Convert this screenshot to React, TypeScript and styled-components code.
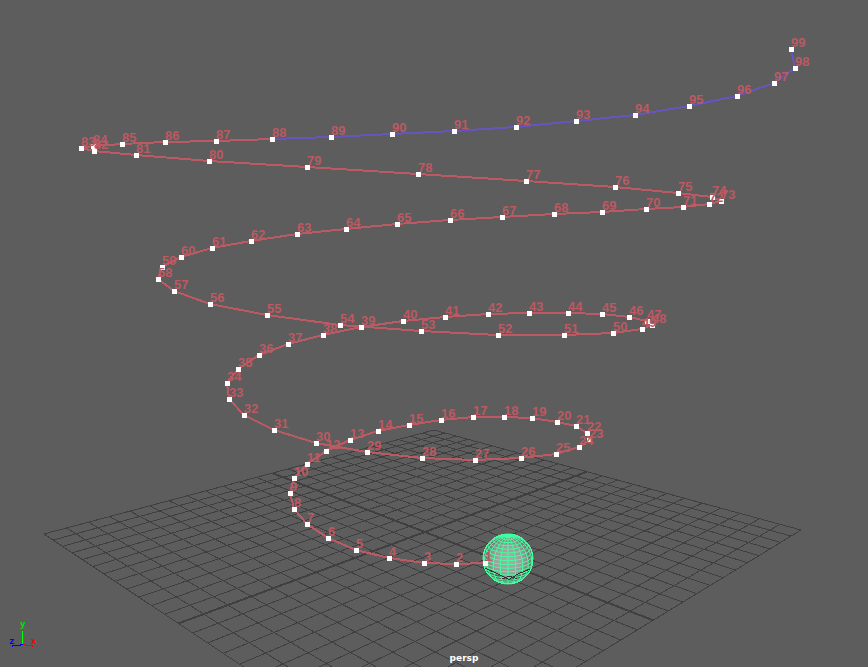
import React from "react";
import styled, { createGlobalStyle } from "styled-components";

type Point = [number, number];

const GlobalStyle = createGlobalStyle`
  html, body { margin: 0; background: #5d5d5d; }
`;

const Viewport = styled.main`
  display: grid;
  min-height: 100vh;
  background: #5d5d5d;
`;

const Scene = styled.svg`
  display: block;
  width: 100%;
  height: 100vh;
`;

const GridLine = styled.line<{ $major?: boolean }>`
  stroke: #404040;
  stroke-width: ${(p) => (p.$major ? 2 : 1)};
  shape-rendering: crispEdges;
`;

const Trail = styled.polyline<{ $tone: string }>`
  fill: none;
  stroke: ${(p) => p.$tone};
  stroke-width: 2;
  shape-rendering: crispEdges;
`;

const Marker = styled.rect`
  fill: #ffffff;
  shape-rendering: crispEdges;
`;

const FrameLabel = styled.text`
  fill: #bc5962;
  font: bold 13px "Liberation Sans", Arial, sans-serif;
`;

const Wire = styled.path`
  fill: none;
  stroke: #43ff9f;
  stroke-width: 1;
`;

const Outline = styled.circle`
  fill: none;
  stroke: #43ff9f;
  stroke-width: 1;
  shape-rendering: crispEdges;
`;

const GroundEdge = styled.polyline`
  fill: none;
  stroke: #2c3a34;
  stroke-width: 1;
  shape-rendering: crispEdges;
`;

const Axis = styled.path<{ $tone: string }>`
  fill: none;
  stroke: ${(p) => p.$tone};
  stroke-width: 1;
  shape-rendering: crispEdges;
`;

const AxisLabel = styled.text<{ $tone: string }>`
  fill: ${(p) => p.$tone};
  font: bold 9px "DejaVu Sans Mono", monospace;
`;

const CameraName = styled.text`
  fill: #ffffff;
  font: bold 9px "DejaVu Sans", sans-serif;
  text-anchor: middle;
`;

const frames: Point[] = [
  [485, 563], [456, 564], [424, 563], [389, 558], [356, 550], [328, 538],
  [307, 524], [294, 509], [290, 493], [294, 478], [307, 464], [326, 451],
  [350, 440], [378, 431], [409, 425], [441, 420], [473, 417], [504, 417],
  [532, 418], [557, 422], [576, 426], [587, 433], [589, 440], [579, 447],
  [556, 454], [521, 458], [475, 460], [422, 458], [367, 452], [316, 443],
  [274, 430], [244, 415], [229, 399], [227, 383], [238, 369], [259, 355],
  [288, 344], [323, 335], [361, 327], [403, 321], [445, 317], [488, 314],
  [529, 313], [568, 313], [602, 314], [629, 317], [647, 321], [652, 325],
  [642, 329], [613, 333], [564, 335], [498, 335], [421, 331], [340, 325],
  [267, 315], [210, 304], [174, 291], [158, 279], [162, 267], [181, 257],
  [212, 248], [251, 241], [297, 234], [346, 229], [397, 224], [450, 220],
  [502, 217], [554, 214], [602, 212], [646, 209], [683, 207], [709, 204],
  [721, 201], [712, 197], [678, 193], [615, 187], [526, 181], [418, 174],
  [307, 167], [209, 161], [136, 155], [94, 151], [81, 148], [93, 146],
  [122, 144], [165, 142], [216, 141], [272, 139], [331, 137], [392, 134],
  [454, 131], [516, 127], [576, 121], [635, 115], [689, 106], [737, 96],
  [774, 83], [795, 68], [791, 49],
];

const toPoints = (list: Point[]) => list.map((p) => p.join(",")).join(" ");

// Perspective mapping of the unit square onto the ground plane quad.
const makeProjection = (a: Point, b: Point, c: Point, d: Point) => {
  const dx1 = b[0] - c[0];
  const dy1 = b[1] - c[1];
  const dx2 = d[0] - c[0];
  const dy2 = d[1] - c[1];
  const sx = a[0] - b[0] + c[0] - d[0];
  const sy = a[1] - b[1] + c[1] - d[1];
  const det = dx1 * dy2 - dx2 * dy1;
  const g = (sx * dy2 - dx2 * sy) / det;
  const h = (dx1 * sy - sx * dy1) / det;
  return (u: number, v: number): Point => {
    const w = g * u + h * v + 1;
    return [
      ((b[0] - a[0] + g * b[0]) * u + (d[0] - a[0] + h * d[0]) * v + a[0]) / w,
      ((b[1] - a[1] + g * b[1]) * u + (d[1] - a[1] + h * d[1]) * v + a[1]) / w,
    ];
  };
};

const ground = makeProjection([44, 534], [403, 773], [801, 530], [434, 430]);
const CELLS = 24;

const Ground = () => (
  <g>
    {Array.from({ length: CELLS + 1 }, (_, i) => {
      const t = i / CELLS;
      const major = i === CELLS / 2;
      const [a, b, c, d] = [ground(t, 0), ground(t, 1), ground(0, t), ground(1, t)];
      return (
        <React.Fragment key={i}>
          <GridLine $major={major} x1={a[0]} y1={a[1]} x2={b[0]} y2={b[1]} />
          <GridLine $major={major} x1={c[0]} y1={c[1]} x2={d[0]} y2={d[1]} />
        </React.Fragment>
      );
    })}
  </g>
);

const CENTER: Point = [508, 559];
const RADIUS = 25;
const TILT = (22 * Math.PI) / 180;

const spherePath = () => {
  const project = (lat: number, lon: number) => {
    const x = Math.cos(lat) * Math.sin(lon);
    const y = Math.sin(lat);
    const z = Math.cos(lat) * Math.cos(lon);
    return {
      x: CENTER[0] + RADIUS * x,
      y: CENTER[1] - RADIUS * (y * Math.cos(TILT) - z * Math.sin(TILT)),
      front: y * Math.sin(TILT) + z * Math.cos(TILT) > -0.02,
    };
  };
  const step = Math.PI / 10;
  let d = "";
  const segment = (a: ReturnType<typeof project>, b: ReturnType<typeof project>) => {
    if (a.front && b.front) {
      d += `M${a.x.toFixed(1)} ${a.y.toFixed(1)}L${b.x.toFixed(1)} ${b.y.toFixed(1)}`;
    }
  };
  for (let i = 0; i < 20; i++) {
    for (let j = -10; j < 10; j++) {
      const lat = (j * step) / 2;
      segment(project(lat, i * step), project(lat + step / 2, i * step));
      segment(project(lat, i * step), project(lat, (i + 1) * step));
    }
  }
  return d;
};

const Sphere = () => (
  <g>
    <defs>
      <radialGradient id="shade" cx="0.5" cy="0.52" r="0.52">
        <stop offset="0" stopColor="#b0adad" />
        <stop offset="0.6" stopColor="#9c9999" />
        <stop offset="1" stopColor="#666666" />
      </radialGradient>
      <clipPath id="above">
        <path d="M480 530H536V568L510 579L480 566Z" />
      </clipPath>
    </defs>
    <circle cx={CENTER[0]} cy={CENTER[1]} r={RADIUS} fill="url(#shade)" clipPath="url(#above)" />
    <Wire d={spherePath()} />
    <Outline cx={CENTER[0]} cy={CENTER[1]} r={RADIUS} />
    <GroundEdge points="485,568 498,574 510,580" />
    <GroundEdge points="530,569 518,574 508,580" />
    <GroundEdge points="502,579 510,576 517,579" />
  </g>
);

const MotionTrail = () => (
  <g>
    <Trail $tone="#bc5962" points={toPoints(frames.slice(0, 88))} />
    <Trail $tone="#6456be" points={toPoints(frames.slice(87))} />
    {frames.map(([x, y], i) => (
      <Marker key={i} x={x - 2} y={y - 2} width={5} height={5} />
    ))}
    {frames.map(([x, y], i) => (
      <FrameLabel key={i} x={x} y={y - 2}>
        {i + 1}
      </FrameLabel>
    ))}
  </g>
);

const AxisGizmo = () => (
  <g>
    <Axis $tone="#00ff00" d="M22.5 631V645" />
    <Axis $tone="#0000ff" d="M12 646.5V645.5H20V644.5H24" />
    <Axis $tone="#ff0000" d="M23 644.5H25V645.5H32V646.5H33" />
    <AxisLabel $tone="#00e000" x={20} y={627}>y</AxisLabel>
    <AxisLabel $tone="#0000ff" x={9} y={644}>z</AxisLabel>
    <AxisLabel $tone="#ff0000" x={31} y={644}>x</AxisLabel>
  </g>
);

export default function App() {
  return (
    <>
      <GlobalStyle />
      <Viewport>
        <Scene viewBox="0 0 868 667" preserveAspectRatio="xMidYMid slice" role="img" aria-label="persp">
          <Ground />
          <Sphere />
          <MotionTrail />
          <AxisGizmo />
          <CameraName x={464} y={661}>persp</CameraName>
        </Scene>
      </Viewport>
    </>
  );
}
